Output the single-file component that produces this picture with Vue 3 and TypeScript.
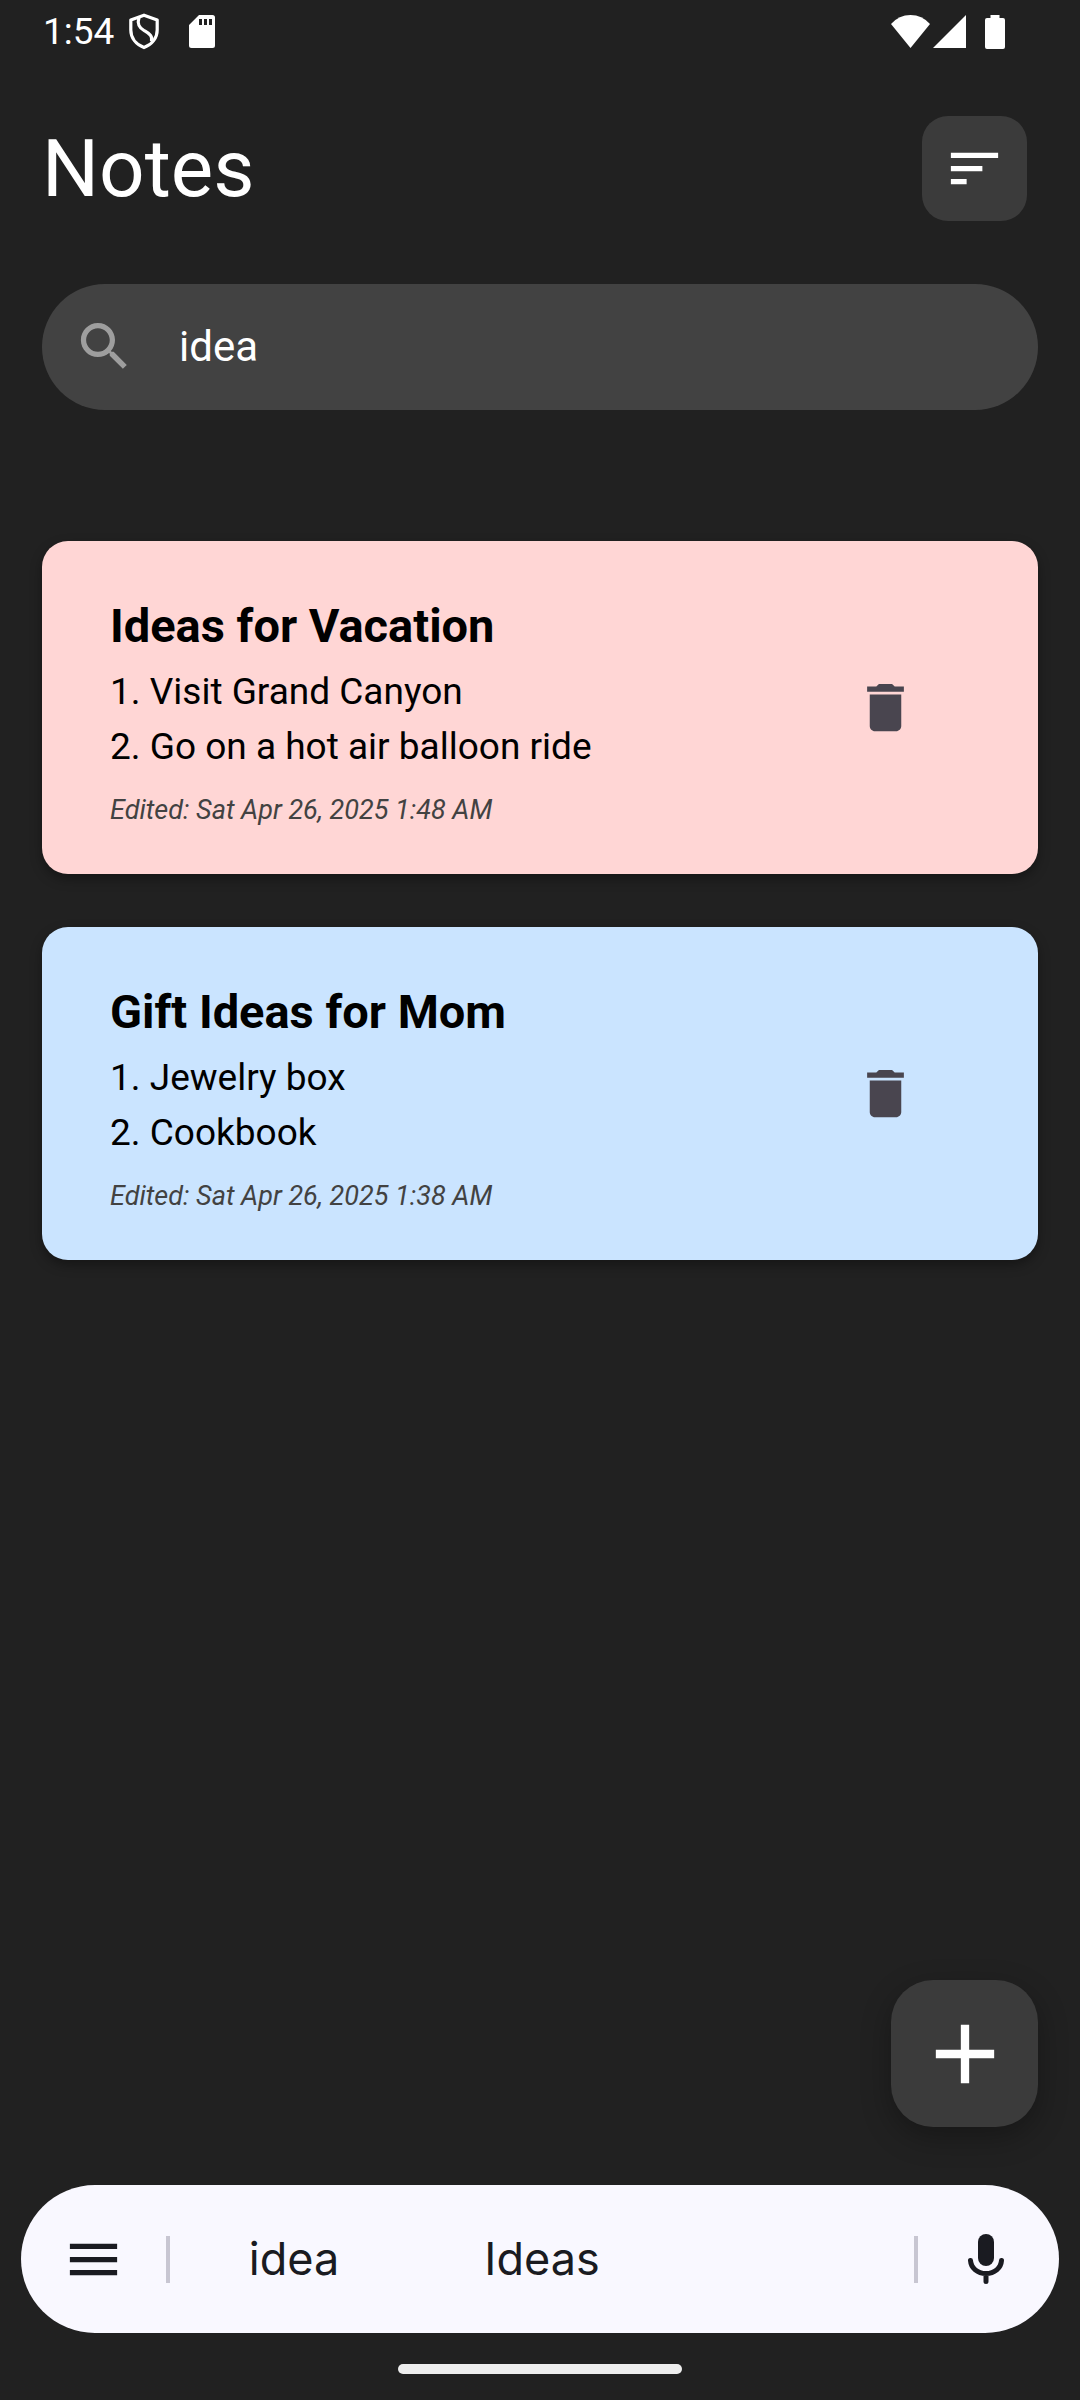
<script setup lang="ts">
import { computed, ref } from 'vue'

interface Note {
  id: number
  title: string
  lines: string[]
  edited: string
  tone: 'rose' | 'sky'
}

const query = ref('idea')

const notes = ref<Note[]>([
  {
    id: 1,
    title: 'Ideas for Vacation',
    lines: ['1. Visit Grand Canyon', '2. Go on a hot air balloon ride'],
    edited: 'Sat Apr 26, 2025 1:48 AM',
    tone: 'rose',
  },
  {
    id: 2,
    title: 'Gift Ideas for Mom',
    lines: ['1. Jewelry box', '2. Cookbook'],
    edited: 'Sat Apr 26, 2025 1:38 AM',
    tone: 'sky',
  },
])

const suggestions = ['idea', 'Ideas', '']

const visibleNotes = computed(() => {
  const q = query.value.trim().toLowerCase()
  return notes.value.filter((n) => (n.title + ' ' + n.lines.join(' ')).toLowerCase().includes(q))
})

function removeNote(id: number) {
  notes.value = notes.value.filter((n) => n.id !== id)
}
</script>

<template>
  <div class="screen">
    <div class="status">
      <span class="clock">1:54</span>
      <svg class="shield" width="32" height="37" viewBox="0 0 32 37" fill="none" stroke="#fff" stroke-width="3.2" stroke-linejoin="round">
        <path d="M16 2.2 L29.2 7 V17 C29.2 25 24 31.500 16 34.600 C8 31.500 2.800 25 2.800 17 V7 Z" />
        <path d="M11 4.500 C9 11 11 14.500 16 17.500 C21 20.500 25 22.500 23.500 28.500" />
      </svg>
      <svg class="sd" width="26" height="33" viewBox="0 0 26 33">
        <path fill="#fff" fill-rule="evenodd" d="M10 0H23.500Q26 0 26 2.500V30.500Q26 33 23.500 33H2.500Q0 33 0 30.500V10ZM10 4V10H13V4ZM15 4V10H18V4ZM20 4V10H23V4Z" />
      </svg>
      <span class="spacer"></span>
      <svg class="wifi" width="39" height="33" viewBox="0 0 39 33">
        <path fill="#fff" d="M0 9Q8 0 19.500 0T39 9L19.500 33Z" />
      </svg>
      <svg class="signal" width="33" height="33" viewBox="0 0 33 33"><path fill="#fff" d="M33 0V33H0Z" /></svg>
      <svg class="battery" width="20" height="34" viewBox="0 0 20 34">
        <path fill="#fff" d="M5.500 0H14.500V3H18Q20 3 20 5V32Q20 34 18 34H2Q0 34 0 32V5Q0 3 2 3H5.500Z" />
      </svg>
    </div>

    <header class="header">
      <h1>Notes</h1>
      <button class="sort" type="button" aria-label="Sort notes">
        <svg width="63" height="63" viewBox="0 0 24 24"><path fill="#fff" d="M3 18h6v-2H3v2zM3 6v2h18V6H3zm0 7h12v-2H3v2z" /></svg>
      </button>
    </header>

    <label class="search">
      <svg width="63" height="63" viewBox="0 0 24 24">
        <path fill="#9e9e9e" d="M15.500 14h-.79l-.28-.27C15.410 12.590 16 11.110 16 9.500 16 5.910 13.090 3 9.500 3S3 5.910 3 9.500 5.910 16 9.500 16c1.610 0 3.090-.59 4.230-1.570l.27.28v.79l5 4.990L20.490 19l-4.990-5zm-6 0C7.010 14 5 11.990 5 9.500S7.010 5 9.500 5 14 7.010 14 9.500 11.990 14 9.500 14z" />
      </svg>
      <input v-model="query" type="text" aria-label="Search notes" />
    </label>

    <main class="notes">
      <article v-for="note in visibleNotes" :key="note.id" class="card" :class="note.tone">
        <div class="body">
          <h2>{{ note.title }}</h2>
          <p v-for="line in note.lines" :key="line" class="line">{{ line }}</p>
          <p class="edited">Edited: {{ note.edited }}</p>
        </div>
        <button class="delete" type="button" :aria-label="`Delete ${note.title}`" @click="removeNote(note.id)">
          <svg width="63" height="63" viewBox="0 0 24 24">
            <path fill="#49454f" d="M6 19c0 1.100.9 2 2 2h8c1.100 0 2-.9 2-2V7H6v12zM19 4h-3.500l-1-1h-5l-1 1H5v2h14V4z" />
          </svg>
        </button>
      </article>
    </main>

    <button class="fab" type="button" aria-label="Add note">
      <svg width="100" height="100" viewBox="0 0 24 24"><path fill="#fff" d="M19 13h-6v6h-2v-6H5v-2h6V5h2v6h6v2z" /></svg>
    </button>

    <div class="keyboard">
      <button class="tool" type="button" aria-label="Keyboard menu">
        <svg width="63" height="63" viewBox="0 0 24 24"><path fill="#1a1b21" d="M3 18h18v-2H3v2zm0-5h18v-2H3v2zm0-7v2h18V6H3z" /></svg>
      </button>
      <span class="divider"></span>
      <div class="suggestions">
        <template v-for="(word, i) in suggestions" :key="i">
          <button v-if="word" class="word" type="button" @click="query = word">{{ word }}</button>
          <span v-else class="word"></span>
        </template>
      </div>
      <span class="divider"></span>
      <button class="tool voice" type="button" aria-label="Voice input">
        <svg width="38" height="50" viewBox="0 0 38 50">
          <rect x="11" y="0" width="16" height="32" rx="8" fill="#1a1b21" />
          <path d="M3.500 26.500C4 34 10.500 39.500 19 39.500S34 34 34.500 26.500M19 40v7.500" fill="none" stroke="#1a1b21" stroke-width="5" stroke-linecap="round" />
        </svg>
      </button>
    </div>
    <div class="home"></div>
  </div>
</template>

<style>
body {
  background: #212121;
}
</style>

<style scoped>
.screen {
  box-sizing: border-box;
  display: flex;
  flex-direction: column;
  min-height: 100vh;
  padding-bottom: 26px;
  background: #212121;
  color: #fff;
  font-family: Roboto, 'Liberation Sans', sans-serif;
}
svg {
  display: block;
  flex: none;
}
button {
  display: flex;
  align-items: center;
  justify-content: center;
  margin: 0;
  padding: 0;
  border: 0;
  background: none;
  color: inherit;
  font: inherit;
  cursor: pointer;
}
h1,
h2,
p {
  margin: 0;
}
.status {
  display: flex;
  align-items: center;
  height: 63px;
  padding: 0 75px 0 43px;
}
.clock {
  font-size: 37px;
  line-height: 42px;
}
.shield {
  margin-left: 14px;
}
.sd {
  margin-left: 29px;
}
.spacer {
  flex: 1;
}
.signal {
  margin: 0 19px 0 3px;
}
.header {
  display: flex;
  align-items: center;
  justify-content: space-between;
  padding: 53px 53px 63px 42px;
}
h1 {
  font-size: 80px;
  font-weight: 400;
  line-height: 96px;
}
.sort {
  width: 105px;
  height: 105px;
  border-radius: 26px;
  background: #3b3b3b;
}
.search {
  display: flex;
  align-items: center;
  gap: 43px;
  height: 126px;
  margin: 0 42px;
  padding: 0 42px 2px 31px;
  box-sizing: border-box;
  border-radius: 63px;
  background: #424242;
}
.search input {
  flex: 1;
  min-width: 0;
  padding: 0;
  border: 0;
  outline: none;
  background: none;
  color: #fff;
  font-family: inherit;
  font-size: 42px;
  line-height: 63px;
}
.notes {
  display: flex;
  flex: 1;
  flex-direction: column;
  gap: 53px;
  padding: 131px 42px 53px;
}
.card {
  display: flex;
  align-items: center;
  padding: 0 121px 0 68px;
  border-radius: 26px;
  color: #000;
  box-shadow: 0 5px 12px rgba(0, 0, 0, 0.35);
}
.rose {
  background: #ffd6d5;
}
.sky {
  background: #cae4ff;
}
.body {
  flex: 1;
  min-width: 0;
  padding: 49px 0 44px;
}
h2 {
  margin-bottom: 3px;
  font-size: 47px;
  font-weight: 700;
  line-height: 71px;
}
.line {
  font-size: 37px;
  line-height: 55px;
}
.edited {
  margin-top: 17px;
  color: #424242;
  font-size: 27px;
  font-style: italic;
  line-height: 39px;
}
.delete {
  flex: none;
}
.fab {
  align-self: flex-end;
  width: 147px;
  height: 147px;
  margin: 0 42px 58px;
  border-radius: 42px;
  background: #3b3b3b;
  box-shadow: 0 10px 30px rgba(0, 0, 0, 0.3);
}
.keyboard {
  display: flex;
  align-items: center;
  height: 148px;
  margin: 0 21px;
  border-radius: 74px;
  background: #f9f8ff;
  color: #1a1b21;
}
.tool {
  width: 145px;
  height: 100%;
}
.voice {
  width: 141px;
  padding-right: 5px;
}
.divider {
  width: 4px;
  height: 47px;
  background: #c8c6d2;
}
.suggestions {
  display: flex;
  flex: 1;
  height: 100%;
}
.word {
  flex: 1;
  font-family: Inter, 'Liberation Sans', sans-serif;
  font-size: 45px;
  font-weight: 400;
  line-height: 56px;
}
.home {
  align-self: center;
  width: 284px;
  height: 10px;
  margin-top: 31px;
  border-radius: 5px;
  background: #eee;
}
</style>
